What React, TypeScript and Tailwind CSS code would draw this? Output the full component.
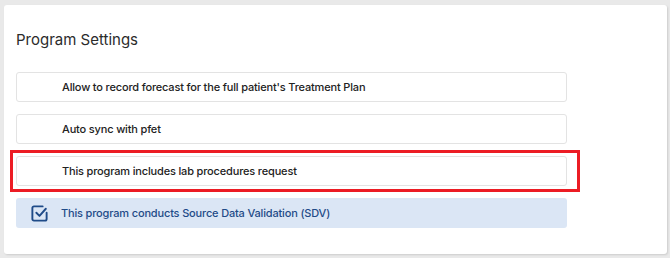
export default function App() {
  const rows = [
    "Allow to record forecast for the full patient's Treatment Plan",
    "Auto sync with pfet",
  ];

  return (
    <div className="min-h-screen w-[670px] h-[258px] bg-[#e9e9e9] pl-[4px] pr-[3px] pt-[5px] pb-[4px] font-['Inter',sans-serif]">
      <div className="h-full rounded-[3px] bg-white shadow-[1px_1px_2px_rgba(0,0,0,0.12)] pl-[12px] pt-[24px]">
        <h2 className="text-[15px] leading-[22px] text-[#2b2b2b]">Program Settings</h2>

        <div className="mt-[21px] flex w-[551px] flex-col gap-[12px]">
          {rows.map((label) => (
            <div
              key={label}
              className="flex h-[30px] items-center rounded-[3px] border border-[#e3e3e3] bg-white pl-[45px] text-[11px] font-medium tracking-[-0.015em] text-[#222]"
            >
              {label}
            </div>
          ))}

          {/* highlighted row */}
          <div className="relative">
            <div className="flex h-[30px] items-center rounded-[3px] border border-[#e3e3e3] bg-white pl-[45px] text-[11px] font-medium tracking-[-0.015em] text-[#222]">
              This program includes lab procedures request
            </div>
            <div className="pointer-events-none absolute -left-[6px] -right-[13px] -top-[6px] -bottom-[6px] border-[3px] border-[#ec1c24]" />
          </div>

          <div className="flex h-[30px] items-center rounded-[3px] bg-[#dbe6f5] pl-[14px] text-[11px] font-medium tracking-[-0.015em] text-[#1f4b88]">
            <svg width="19" height="19" viewBox="0 0 24 24" fill="none" stroke="currentColor" strokeWidth="2.4" strokeLinecap="round" strokeLinejoin="round" className="mr-[12px] shrink-0">
              <path d="M21 11v8a2 2 0 0 1-2 2H5a2 2 0 0 1-2-2V5a2 2 0 0 1 2-2h11" />
              <path d="M8 11l4 4 8-9" />
            </svg>
            This program conducts Source Data Validation (SDV)
          </div>
        </div>
      </div>
    </div>
  );
}
